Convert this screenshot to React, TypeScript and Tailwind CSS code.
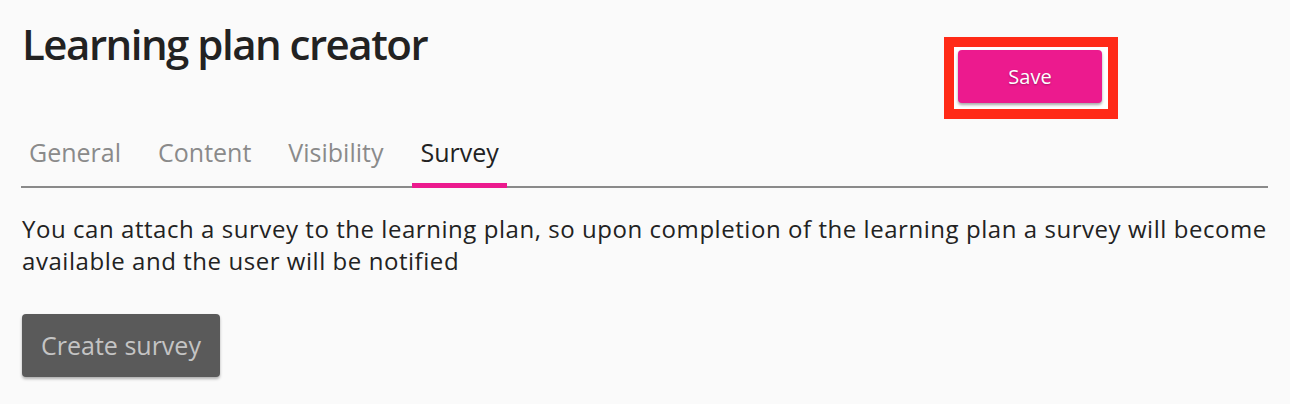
export default function App() {
  const tabs = ['General', 'Content', 'Visibility', 'Survey'];
  const active = 'Survey';

  return (
    <div className="min-h-[404px] bg-[#fafafa] px-[22px] text-[#222]" style={{ fontFamily: '"Open Sans", "Noto Sans", sans-serif' }}>
      <div className="flex items-start justify-between">
        <h1 className="pt-[16px] text-[42px] font-semibold leading-[56px] tracking-[-1.5px] text-[#222]">Learning plan creator</h1>
        <div className="mr-[150px] mt-[37px] border-[10px] border-[#ff2a17] bg-white pb-[6px] pl-[4px] pr-[6px] pt-[3px]">
          <button className="block h-[53px] w-[144px] rounded-[4px] bg-[#ec1a8e] text-[20px] text-white shadow-[0_2px_3px_rgba(0,0,0,0.35)] [text-shadow:0_1px_2px_rgba(0,0,0,0.3)]">
            Save
          </button>
        </div>
      </div>

      <div className="ml-[-1px] mt-[15px] flex gap-[21px] border-b-2 border-[#8a8a8a]">
        {tabs.map((t) => (
          <div
            key={t}
            className={
              t === active
                ? 'relative px-[8px] pb-[16px] text-[25px] leading-[36px] text-[#222]'
                : 'px-[8px] pb-[16px] text-[25px] leading-[36px] text-[#8a8a8a]'
            }
          >
            {t}
            {t === active && <div className="absolute bottom-[-2px] left-0 right-0 h-[5px] bg-[#ec1a8e]" />}
          </div>
        ))}
      </div>

      <p className="mr-[-16px] mt-[25px] text-[24px] leading-[32px] tracking-[0.55px] text-[#222]">
        You can attach a survey to the learning plan, so upon completion of the learning plan a survey will become available and the user will be notified
      </p>

      <button className="mt-[37px] h-[63px] w-[198px] rounded-[4px] bg-[#5a5a5a] text-[25px] text-[#c4c4c4] shadow-[0_2px_3px_rgba(0,0,0,0.3)]">
        Create survey
      </button>
    </div>
  );
}
